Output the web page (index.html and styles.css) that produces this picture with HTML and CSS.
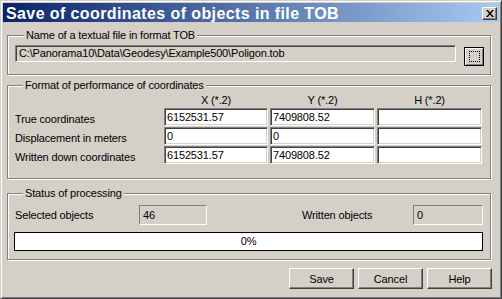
FILE: index.html
```html
<!DOCTYPE html>
<html>
<head>
<meta charset="utf-8">
<link rel="stylesheet" href="styles.css">
</head>
<body>
<div class="window">
  <div class="titlebar">
    <span class="title">Save of coordinates of objects in file TOB</span>
    <button class="close" type="button"><svg width="8" height="7" viewBox="0 0 8 7"><path d="M0 0h2l2 2.5L6 0h2L5 3.5 8 7H6L4 4.5 2 7H0l3-3.5z" fill="#000"/></svg></button>
  </div>
  <fieldset class="group g-file">
    <legend>Name of a textual file in format TOB</legend>
    <div class="file-row">
      <div class="field ro path">C:\Panorama10\Data\Geodesy\Example500\Poligon.tob</div>
      <button class="browse" type="button"><span class="focus"></span></button>
    </div>
  </fieldset>
  <fieldset class="group g-coords">
    <legend>Format of performance of coordinates</legend>
    <div class="coords">
      <span></span><span class="hdr">X (*.2)</span><span class="hdr">Y (*.2)</span><span class="hdr">H (*.2)</span>
      <span class="lbl">True coordinates</span><div class="field">6152531.57</div><div class="field">7409808.52</div><div class="field"></div>
      <span class="lbl">Displacement in meters</span><div class="field">0</div><div class="field">0</div><div class="field"></div>
      <span class="lbl">Written down coordinates</span><div class="field">6152531.57</div><div class="field">7409808.52</div><div class="field"></div>
    </div>
  </fieldset>
  <fieldset class="group g-status">
    <legend>Status of processing</legend>
    <div class="status-row">
      <div class="pair"><span class="slbl sel">Selected objects</span><div class="static s1">46</div></div>
      <div class="pair"><span class="slbl wr">Written objects</span><div class="static s2">0</div></div>
    </div>
    <div class="progress">0%</div>
  </fieldset>
  <div class="buttons">
    <button class="btn" type="button">Save</button>
    <button class="btn" type="button">Cancel</button>
    <button class="btn" type="button">Help</button>
  </div>
</div>
</body>
</html>
```
FILE: styles.css
```css
* { box-sizing: border-box; }
html, body { margin: 0; padding: 0; }
body {
  background: #d4d0c8;
  font-family: "Liberation Sans", Arial, sans-serif;
  font-size: 11px;
  letter-spacing: -0.15px;
  color: #000;
}
.window {
  width: 502px;
  height: 299px;
  background: #d4d0c8;
  border: 1px solid;
  border-color: #d4d0c8 #404040 #404040 #d4d0c8;
  box-shadow: inset 1px 1px #fff, inset -1px -1px #808080;
  padding: 2px;
  display: flex;
  flex-direction: column;
}
.titlebar {
  height: 19px;
  flex: none;
  background: linear-gradient(to right, #0a246a, #a6caf0);
  display: flex;
  align-items: flex-start;
  justify-content: space-between;
  padding: 0 2px 0 3px;
}
.title {
  color: #fff;
  font-weight: bold;
  font-size: 16px;
  letter-spacing: 0.4px;
  line-height: 19px;
  padding-top: 1px;
  white-space: nowrap;
}
.close {
  width: 15px;
  height: 13px;
  margin-top: 4px;
  padding: 0;
  background: #d4d0c8;
  border: 1px solid;
  border-color: #fff #404040 #404040 #fff;
  box-shadow: inset -1px -1px #808080;
  display: flex;
  align-items: center;
  justify-content: center;
}
.close svg { display: block; }

.group {
  margin: 0 8px 0 4px;
  padding: 0;
  border: 1px solid #808080;
  box-shadow: inset 1px 1px #fff, 1px 1px #fff;
  min-width: 0;
  flex: none;
}
.group legend {
  padding: 0 2px;
  margin-left: 9px;
  line-height: 13px;
  background: #d4d0c8;
}
.g-file { margin-top: 7px; padding: 3px 6px 8px 7px; }
.file-row { display: flex; align-items: flex-start; }
.field {
  height: 18px;
  background: #fff;
  border: 1px solid;
  border-color: #808080 #fff #fff #808080;
  box-shadow: inset 1px 1px #404040, inset -1px -1px #d4d0c8;
  padding: 0 2px;
  line-height: 16px;
  white-space: nowrap;
  overflow: hidden;
}
.field.ro { background: #d4d0c8; }
.path { width: 441px; height: 17px; line-height: 15px; padding-left: 3px; }
.browse {
  width: 20px;
  height: 19px;
  margin: 2px 0 0 8px;
  padding: 0;
  background: #d4d0c8;
  border: 1px solid #000;
  box-shadow: inset 1px 1px #fff, inset -1px -1px #808080;
  display: flex;
  align-items: center;
  justify-content: center;
}
.focus {
  width: 11px;
  height: 11px;
  border: 1px dotted #000;
}

.g-coords { margin-top: 4px; padding: 2px 8px 14px 6px; }
.coords {
  display: grid;
  grid-template-columns: 148px 104px 105px 105px;
  grid-template-rows: 13px 18px 18px 18px;
  column-gap: 2px;
  row-gap: 1px;
}
.hdr { text-align: center; line-height: 13px; }
.lbl { line-height: 13px; padding-top: 5px; padding-left: 1px; white-space: nowrap; }

.g-status { margin-top: 8px; padding: 5px 7px 8px 6px; }
.status-row { display: flex; justify-content: space-between; }
.pair { display: flex; align-items: center; }
.slbl { white-space: nowrap; line-height: 13px; }
.sel { width: 125px; padding-left: 1px; }
.wr { width: 111px; }
.static {
  height: 20px;
  background: #d4d0c8;
  border: 1px solid;
  border-color: #808080 #fff #fff #808080;
  padding: 0 3px;
  line-height: 18px;
}
.s1 { width: 68px; }
.s2 { width: 70px; }
.progress {
  margin-top: 7px;
  height: 19px;
  background: #fff;
  border: 1px solid #000;
  text-align: center;
  line-height: 17px;
}

.buttons {
  margin-top: 8px;
  display: flex;
  justify-content: flex-end;
  gap: 4px;
  padding-right: 7px;
}
.btn {
  width: 65px;
  height: 21px;
  padding: 0;
  background: #d4d0c8;
  border: 1px solid;
  border-color: #fff #404040 #404040 #fff;
  box-shadow: inset -1px -1px #808080;
  font-family: "Liberation Sans", Arial, sans-serif;
  font-size: 11px;
  letter-spacing: -0.15px;
  color: #000;
}
```
